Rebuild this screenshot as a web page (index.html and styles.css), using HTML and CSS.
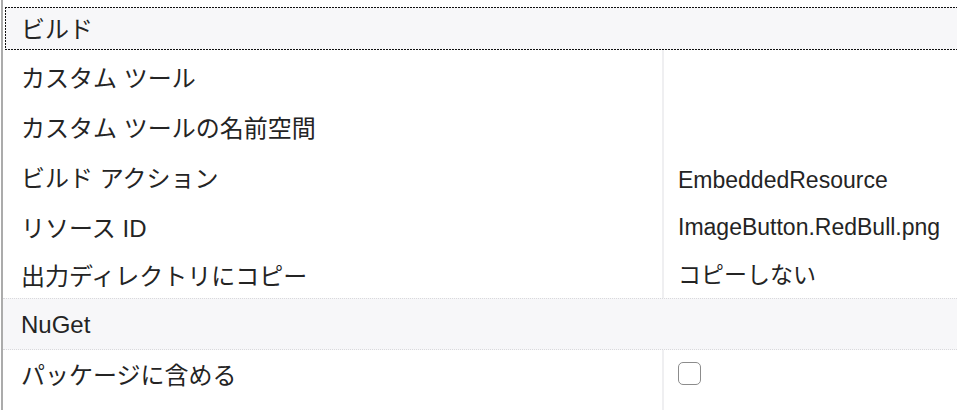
FILE: index.html
```html
<!DOCTYPE html>
<html lang="ja">
<head>
<meta charset="utf-8">
<link rel="stylesheet" href="styles.css">
</head>
<body>
<div class="panel">
  <div class="section focused"><span class="section-title">ビルド</span></div>
  <div class="row"><div class="label">カスタム ツール</div><div class="value"></div></div>
  <div class="row"><div class="label">カスタム ツールの名前空間</div><div class="value"></div></div>
  <div class="row"><div class="label">ビルド アクション</div><div class="value value-combo">EmbeddedResource</div></div>
  <div class="row"><div class="label">リソース ID</div><div class="value">ImageButton.RedBull.png</div></div>
  <div class="row row-short"><div class="label">出力ディレクトリにコピー</div><div class="value">コピーしない</div></div>
  <div class="section"><span class="section-title">NuGet</span></div>
  <div class="row row-last"><div class="label">パッケージに含める</div><div class="value value-check"><span class="checkbox"></span></div></div>
</div>
</body>
</html>
```
FILE: styles.css
```css
html, body {
  margin: 0;
  padding: 0;
  background: #ffffff;
}
body {
  font-family: "Liberation Sans", "Noto Sans CJK JP", sans-serif;
  font-size: 24px;
  color: #242424;
  overflow: hidden;
}
.panel {
  margin-left: 1px;
  border-left: 2px solid #ababab;
  padding-top: 7px;
  height: 410px;
  box-sizing: border-box;
}
.section {
  height: 52px;
  box-sizing: border-box;
  background: #f7f7f9;
  border-top: 1px dotted #d9d9dc;
  border-bottom: 1px dotted #d9d9dc;
  display: flex;
  align-items: center;
  padding-left: 18px;
  padding-top: 2px;
}
.section.focused {
  height: 43px;
  margin-left: 2px;
  border: none;
  background-color: #f7f7f9;
  background-image:
    repeating-linear-gradient(to right, #111 0 2px, transparent 2px 3px),
    repeating-linear-gradient(to right, #111 0 2px, transparent 2px 3px),
    repeating-linear-gradient(to bottom, #111 0 2px, transparent 2px 3px);
  background-size: 100% 1px, 100% 1px, 1px 100%;
  background-position: left top, left bottom, left top;
  background-repeat: no-repeat;
  padding-left: 16px;
  padding-top: 0;
  padding-bottom: 2px;
}
.row {
  display: grid;
  grid-template-columns: 659px 1fr;
  height: 50px;
}
.row-short {
  height: 48px;
}
.row-last {
  height: 60px;
}
.label {
  display: flex;
  align-items: center;
  padding-left: 18px;
  padding-top: 2px;
}
.row-short .label {
  padding-top: 0;
}
.row-last .label {
  padding-top: 0;
  padding-bottom: 14px;
}
.value {
  border-left: 2px solid #efeff1;
  display: flex;
  align-items: center;
  padding-left: 14px;
  padding-top: 4px;
  font-size: 23px;
}
.row-short .value {
  padding-top: 0;
  padding-bottom: 3px;
}
.value-combo {
  padding-top: 10px;
}
.value-check {
  align-items: flex-start;
  padding-top: 12px;
}
.checkbox {
  display: block;
  width: 23px;
  height: 23px;
  box-sizing: border-box;
  border: 1px solid #8c8c8c;
  border-radius: 5px;
  background: #ffffff;
}
```
